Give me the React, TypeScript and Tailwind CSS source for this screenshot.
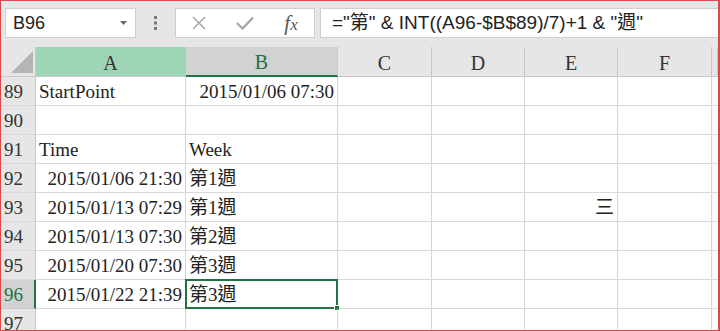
import React from "react";

const serif = "font-['Liberation_Serif','Noto_Sans_CJK_TC',serif]";

// column widths: A, B, C, D, E, F, rest
const cols = [150, 152, 94, 93, 93, 94, 6];
const letters = ["A", "B", "C", "D", "E", "F", ""];

type Row = { n: number; a?: string; aRight?: boolean; b?: string; bRight?: boolean; e?: string };

const rows: Row[] = [
  { n: 89, a: "StartPoint", b: "2015/01/06 07:30", bRight: true },
  { n: 90 },
  { n: 91, a: "Time", b: "Week" },
  { n: 92, a: "2015/01/06 21:30", aRight: true, b: "第1週" },
  { n: 93, a: "2015/01/13 07:29", aRight: true, b: "第1週", e: "三" },
  { n: 94, a: "2015/01/13 07:30", aRight: true, b: "第2週" },
  { n: 95, a: "2015/01/20 07:30", aRight: true, b: "第3週" },
  { n: 96, a: "2015/01/22 21:39", aRight: true, b: "第3週" },
  { n: 97 },
];

function Cell({ w, text, right, children }: { w: number; text?: string; right?: boolean; children?: React.ReactNode }) {
  return (
    <div
      className={`relative shrink-0 h-full border-r border-[#d4d4d4] flex items-center overflow-visible whitespace-nowrap px-[3px] pt-[2px] ${right ? "justify-end" : "justify-start"}`}
      style={{ width: w }}
    >
      {text}
      {children}
    </div>
  );
}

export default function App() {
  return (
    <div className="w-[720px] h-[331px] overflow-hidden bg-white">
      <div className="w-[720px] h-[331px] border border-[#d64a4a] border-r-2 flex flex-col overflow-hidden bg-[#e6e6e6]">
        {/* formula bar */}
        <div className="h-[46px] shrink-0 flex items-start pt-[7px] pl-[4px] gap-0 font-['Liberation_Sans','Noto_Sans_CJK_TC',sans-serif]">
          <div className="w-[131px] h-[30px] bg-white border border-[#cfcfcf] flex items-center justify-between pl-[7px] pr-[8px]">
            <span className="text-[18px] text-[#222]">B96</span>
            <svg width="7" height="5" viewBox="0 0 7 5" className="mt-[1px]">
              <path d="M0 0 L7 0 L3.5 4 Z" fill="#666" />
            </svg>
          </div>
          <div className="w-[39px] h-[30px] flex items-center justify-center">
            <svg width="3" height="14" viewBox="0 0 3 14">
              <rect x="0" y="0" width="3" height="3" fill="#777" />
              <rect x="0" y="5.5" width="3" height="3" fill="#777" />
              <rect x="0" y="11" width="3" height="3" fill="#777" />
            </svg>
          </div>
          <div className="w-[140px] h-[30px] bg-white border border-[#cfcfcf] flex items-center">
            <div className="w-[46px] flex justify-center">
              <svg width="16" height="16" viewBox="0 0 16 16">
                <path d="M2 2 L14 14 M14 2 L2 14" stroke="#a8a8a8" strokeWidth="1.6" />
              </svg>
            </div>
            <div className="w-[46px] flex justify-center">
              <svg width="18" height="16" viewBox="0 0 18 16">
                <path d="M1 8 L6.5 13.5 L17 2.5" stroke="#a8a8a8" strokeWidth="2.4" fill="none" />
              </svg>
            </div>
            <div className="w-[46px] flex justify-center">
              <span className="font-['Liberation_Serif',serif] italic text-[21px] text-[#555] leading-none">
                f<span className="text-[17px]">x</span>
              </span>
            </div>
          </div>
          <div className="ml-[5px] flex-1 h-[30px] bg-white border border-[#cfcfcf] border-r-0 flex items-center pl-[11px]">
            <span className="text-[19px] text-[#222] whitespace-nowrap">="第" &amp; INT((A96-$B$89)/7)+1 &amp; "週"</span>
          </div>
        </div>

        {/* column headers */}
        <div className={`h-[30px] shrink-0 flex ${serif} text-[20px] text-[#333]`}>
          <div className="w-[35px] shrink-0 h-full border-r border-b border-[#c8c8c8] relative flex items-end justify-end pr-[2px] pb-[3px]">
            <svg width="22" height="22" viewBox="0 0 22 22">
              <path d="M22 0 L22 22 L0 22 Z" fill="#b5b5b5" />
            </svg>
          </div>
          {letters.map((l, i) => (
            <div
              key={i}
              className={`shrink-0 h-full flex items-center justify-center pt-[2px] border-r ${
                i === 0
                  ? "bg-[#9fd5b7] border-[#9fd5b7] border-b border-b-[#c8c8c8]"
                  : i === 1
                  ? "bg-[#d2d2d2] border-[#c8c8c8] border-b-2 border-b-[#217346] text-[#217346]"
                  : "border-[#c8c8c8] border-b border-b-[#c8c8c8]"
              }`}
              style={{ width: cols[i] }}
            >
              {l}
            </div>
          ))}
        </div>

        {/* rows */}
        <div className={`flex-1 flex flex-col ${serif} text-[19px] text-[#222]`}>
          {rows.map((r) => {
            const sel = r.n === 96;
            return (
              <div key={r.n} className="h-[29px] shrink-0 flex">
                <div
                  className={`w-[35px] shrink-0 h-full flex items-center pl-[3px] pt-[2px] border-b ${
                    sel
                      ? "bg-[#d2d2d2] text-[#217346] border-r-2 border-r-[#217346] border-b-[#c8c8c8]"
                      : "text-[#333] border-r border-r-[#c8c8c8] border-b-[#d9d9d9]"
                  }`}
                >
                  {r.n}
                </div>
                <div className="flex flex-1 bg-white border-b border-[#d9d9d9]">
                  <Cell w={cols[0]} text={r.a} right={r.aRight} />
                  <Cell w={cols[1]} text={r.b} right={r.bRight}>
                    {sel && (
                      <div className="absolute -left-px -top-px -right-px -bottom-px border-2 border-[#217346] pointer-events-none">
                        <div className="absolute -right-[4px] -bottom-[4px] w-[6px] h-[6px] bg-[#217346] border border-white" />
                      </div>
                    )}
                  </Cell>
                  <Cell w={cols[2]} />
                  <Cell w={cols[3]} />
                  <Cell w={cols[4]} text={r.e} right />
                  <Cell w={cols[5]} />
                  <Cell w={cols[6]} />
                </div>
              </div>
            );
          })}
        </div>
      </div>
    </div>
  );
}
